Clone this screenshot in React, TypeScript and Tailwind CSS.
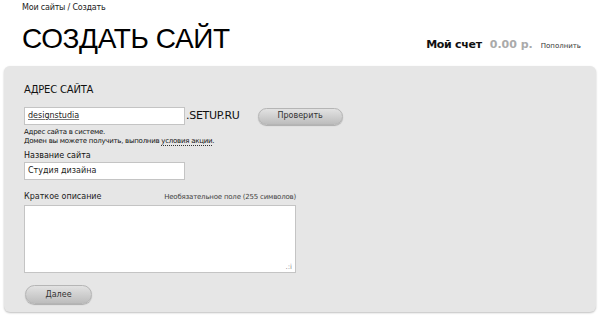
import React from 'react';

const font = { fontFamily: '"DejaVu Sans", Verdana, sans-serif' };

const PillButton: React.FC<{ label: string; className?: string }> = ({ label, className }) => (
  <button
    className={`h-[17px] rounded-full border border-[#b5b5b5] bg-gradient-to-b from-[#e2e2e2] to-[#bdbdbd] text-[8px] text-[#333] shadow-[0_1px_1px_rgba(0,0,0,0.25)] ${className ?? ''}`}
  >
    {label}
  </button>
);

export default function App() {
  return (
    <div className="w-[600px] h-[317px] bg-white overflow-hidden" style={font}>
      <div className="px-[22px] pt-[3px]">
        <div className="text-[8px] leading-[10px] text-[#222] tracking-[-0.2px]">Мои сайты / Создать</div>
        <div className="flex items-end justify-between mt-[10px]">
          <h1 className="text-[28px] leading-[32px] text-black tracking-[-0.4px] font-['Liberation_Sans','DejaVu_Sans',sans-serif]">
            СОЗДАТЬ САЙТ
          </h1>
          <div className="flex items-baseline gap-[8px] mb-[2px] mr-[-3px]">
            <span className="text-[11px] font-bold text-[#111] tracking-[-0.3px]">Мой счет</span>
            <span className="text-[11px] font-bold text-[#aaa]">0.00 р.</span>
            <span className="text-[7px] text-[#333]">Пополнить</span>
          </div>
        </div>
      </div>

      <div className="mx-[4px] mt-[11px] h-[246px] rounded-[6px] bg-[#e6e6e6] shadow-[0_1px_2px_rgba(0,0,0,0.25)] px-[20px] pt-[16px]">
        <div className="text-[10px] text-[#111] tracking-[-0.2px]">АДРЕС САЙТА</div>

        <div className="flex items-center mt-[10px]">
          <div className="w-[161px] h-[18px] bg-white border border-[#c4c4c4] px-[3px] flex items-center">
            <span className="text-[8px] text-[#222] underline decoration-[#777]">designstudia</span>
          </div>
          <span className="text-[11px] text-[#111] ml-[1px] tracking-[-0.3px]">.SETUP.RU</span>
          <PillButton label="Проверить" className="w-[85px] ml-[18px]" />
        </div>
        <div className="text-[7px] leading-[9px] text-[#111] mt-[3px] tracking-[-0.25px]">
          <div>Адрес сайта в системе.</div>
          <div>
            Домен вы можете получить, выполнив{' '}
            <span className="border-b border-dotted border-[#333]">условия акции</span>.
          </div>
        </div>

        <div className="text-[8px] text-[#111] mt-[5px] leading-[10px]">Название сайта</div>
        <div className="w-[161px] h-[18px] bg-white border border-[#c4c4c4] px-[3px] flex items-center mt-[1px]">
          <span className="text-[8px] text-[#222]">Студия дизайна</span>
        </div>

        <div className="w-[272px] flex justify-between items-end mt-[12px]">
          <span className="text-[8px] text-[#222] leading-[10px]">Краткое описание</span>
          <span className="text-[7px] text-[#444] leading-[10px] tracking-[-0.2px]">Необязательное поле (255 символов)</span>
        </div>
        <div className="relative w-[272px] h-[68px] bg-white border border-[#c4c4c4] mt-[3px]">
          <span className="absolute right-[3px] bottom-[1px] text-[7px] text-[#888] leading-none">.:i</span>
        </div>

        <PillButton label="Далее" className="w-[67px] h-[19px] mt-[12px] ml-[1px] text-[8px]" />
      </div>
    </div>
  );
}
